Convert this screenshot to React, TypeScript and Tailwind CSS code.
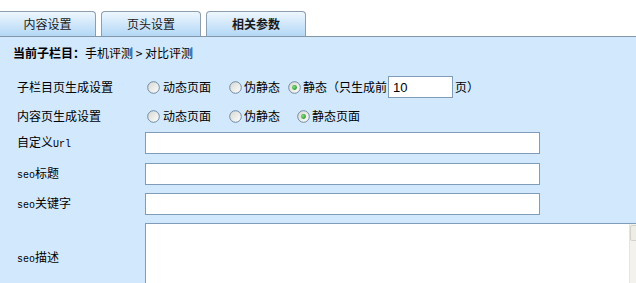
import clsx from "clsx";

function Radio({ checked = false }: { checked?: boolean }) {
  return (
    <svg width="13" height="13" viewBox="0 0 13 13" className="shrink-0">
      <defs>
        <linearGradient id="radioFill" x1="0" y1="0" x2="1" y2="1">
          <stop offset="0" stopColor="#d6d6d0" />
          <stop offset="1" stopColor="#ffffff" />
        </linearGradient>
        <radialGradient id="radioDot" cx="0.4" cy="0.4" r="0.6">
          <stop offset="0" stopColor="#8fe08a" />
          <stop offset="1" stopColor="#1f9a1f" />
        </radialGradient>
      </defs>
      <circle cx="6.5" cy="6.5" r="5.8" fill="url(#radioFill)" stroke="#6f8aa3" strokeWidth="1" />
      {checked && <circle cx="6.5" cy="6.5" r="2.4" fill="url(#radioDot)" />}
    </svg>
  );
}

function Tab({ label, active = false, first = false }: { label: string; active?: boolean; first?: boolean }) {
  return (
    <div
      className={clsx(
        "flex h-[25px] items-center justify-center border border-b-0 border-[#8d9eae] bg-gradient-to-b from-[#eef7ff] to-[#b3d7f5] text-[#1a1a1a]",
        first ? "w-[96px] rounded-tr-[4px] border-l-0" : "w-[100px] rounded-t-[4px]",
        active && "font-bold"
      )}
    >
      {label}
    </div>
  );
}

function Label({ children, tall = false }: { children: React.ReactNode; tall?: boolean }) {
  return (
    <div className={clsx("flex w-[145px] shrink-0 items-center pl-[17px]", tall && "h-[70px]")}>
      <span>{children}</span>
    </div>
  );
}

function Mono({ children }: { children: React.ReactNode }) {
  return <span className="font-['Liberation_Mono',monospace] text-[10px]">{children}</span>;
}

export default function App() {
  return (
    <div className="h-[283px] w-[636px] overflow-hidden bg-white font-['Noto_Sans_CJK_SC',sans-serif] text-[12px] leading-none text-black">
      <div className="flex h-[36px] items-end gap-[5px]">
        <Tab label="内容设置" first />
        <Tab label="页头设置" />
        <Tab label="相关参数" active />
      </div>

      <div className="h-full border-t border-[#8497a8] bg-[#d2e8fc]">
        <div className="flex h-[32px] items-center pl-[13px]">
          <span className="font-bold">当前子栏目：</span>
          <span>手机评测 &gt; 对比评测</span>
        </div>

        {/* 子栏目页 */}
        <div className="mt-[7px] flex h-[22px] items-center">
          <Label>子栏目页生成设置</Label>
          <span className="ml-[2px] flex items-center gap-[3px]">
            <Radio />
            动态页面
          </span>
          <span className="ml-[18px] flex items-center gap-[2px]">
            <Radio />
            伪静态
          </span>
          <span className="ml-[8px] flex items-center gap-[2px]">
            <Radio checked />
            静态（只生成前
          </span>
          <input
            defaultValue="10"
            className="ml-[1px] h-[22px] w-[65px] border border-[#7f9db9] bg-white px-[4px] font-['Liberation_Sans',sans-serif] text-[13px] outline-none"
          />
          <span className="ml-[2px]">页）</span>
        </div>

        {/* 内容页 */}
        <div className="mt-[7px] flex h-[22px] items-center">
          <Label>内容页生成设置</Label>
          <span className="ml-[2px] flex items-center gap-[3px]">
            <Radio />
            动态页面
          </span>
          <span className="ml-[18px] flex items-center gap-[2px]">
            <Radio />
            伪静态
          </span>
          <span className="ml-[17px] flex items-center gap-[2px]">
            <Radio checked />
            静态页面
          </span>
        </div>

        <div className="mt-[5px] flex h-[22px] items-center">
          <Label>
            自定义<Mono>Url</Mono>
          </Label>
          <input className="h-[22px] w-[395px] border border-[#7f9db9] bg-white outline-none" />
        </div>

        <div className="mt-[9px] flex h-[22px] items-center">
          <Label>
            <Mono>seo</Mono>标题
          </Label>
          <input className="h-[22px] w-[395px] border border-[#7f9db9] bg-white outline-none" />
        </div>

        <div className="mt-[8px] flex h-[22px] items-center">
          <Label>
            <Mono>seo</Mono>关键字
          </Label>
          <input className="h-[22px] w-[395px] border border-[#7f9db9] bg-white outline-none" />
        </div>

        <div className="mt-[8px] flex items-start">
          <Label tall>
            <Mono>seo</Mono>描述
          </Label>
          <div className="flex h-[70px] w-[500px] shrink-0 border border-[#7f9db9] bg-white">
            <textarea className="h-full flex-1 resize-none bg-white outline-none" />
            {/* scrollbar strip, mostly cut off at the right edge */}
            <div className="ml-[-9px] flex w-[15px] flex-col border-l border-[#e6e4dc] bg-[#f3f2ed] pt-[1px]">
              <div className="h-[16px] rounded-[2px] border border-[#d5d3ca] bg-[#eeede5]" />
            </div>
          </div>
        </div>
      </div>
    </div>
  );
}
